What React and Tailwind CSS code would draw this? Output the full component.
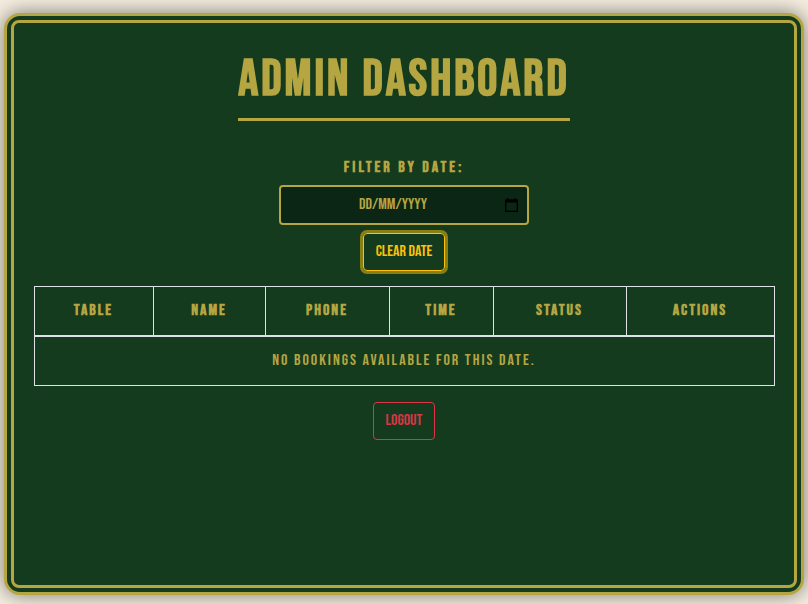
import { useState } from "react";

const columns = [
  { label: "Table", width: "w-[119px]" },
  { label: "Name", width: "w-[112px]" },
  { label: "Phone", width: "w-[124px]" },
  { label: "Time", width: "w-[104px]" },
  { label: "Status", width: "w-[133px]" },
  { label: "Actions", width: "w-[148px]" },
];

function CalendarIcon() {
  return (
    <svg viewBox="0 0 14 14" className="h-[14px] w-[14px] fill-black" aria-hidden="true">
      <path
        fillRule="evenodd"
        d="M2 0h1.500v1.300h6V0H11v1.300h1c.6 0 1 .4 1 1V13c0 .6-.4 1-1 1H1c-.6 0-1-.4-1-1V2.300c0-.6.4-1 1-1h1zM1.300 4.500v8.200h10.400V4.500z"
      />
    </svg>
  );
}

export default function App() {
  const [date, setDate] = useState("");

  return (
    <div className="flex min-h-screen flex-col bg-[#f5eee0] px-1 pt-[13px] pb-[9px] font-['Bebas_Neue','Liberation_Sans_Narrow','Liberation_Sans',sans-serif] text-base text-[#b5a642] uppercase">
      <div className="flex grow flex-col rounded-[16px] border-3 border-[#b5a642] bg-[#153b1f] p-1 shadow-[0_0_20px_rgba(0,0,0,0.5)]">
        <main className="flex grow flex-col items-center rounded-[8px] border-3 border-[#b5a642] px-5 pt-6">
          <h1 className="border-b-3 border-[#b5a642] pt-[3px] pb-2 text-[50px] leading-[60px] font-bold tracking-[3px] whitespace-nowrap">
            Admin Dashboard
          </h1>

          <label htmlFor="date" className="mt-9 leading-[22px] font-bold tracking-[3px]">
            Filter by Date:
          </label>
          <div className="mt-1.5 flex h-10 w-[250px] items-center rounded border-2 border-[#b5a642] bg-[#0c2615] pr-2">
            <input
              id="date"
              type="text"
              value={date}
              onChange={(e) => setDate(e.target.value)}
              placeholder="DD/MM/YYYY"
              className="min-w-0 grow bg-transparent text-center outline-none placeholder:text-[#b5a642]"
            />
            <button type="button" aria-label="Open calendar">
              <CalendarIcon />
            </button>
          </div>
          <button
            type="button"
            onClick={() => setDate("")}
            className="mt-2 h-[38px] rounded border border-[#ffc107] px-3 whitespace-nowrap text-[#ffc107] uppercase ring-3 ring-[#8a7f12]"
          >
            Clear Date
          </button>

          <table className="mt-[15px] w-full table-fixed border-collapse text-center">
            <thead>
              <tr className="h-[49px]">
                {columns.map((c) => (
                  <th key={c.label} scope="col" className={`${c.width} border border-b-2 border-[#dee2e6] font-bold tracking-[2px]`}>
                    {c.label}
                  </th>
                ))}
              </tr>
            </thead>
            <tbody>
              <tr className="h-[50px]">
                <td colSpan={6} className="border border-[#dee2e6] tracking-[2px]">
                  No bookings available for this date.
                </td>
              </tr>
            </tbody>
          </table>

          <button
            type="button"
            className="mt-4 h-[38px] rounded border border-[#dc3545] px-3 text-[#dc3545] uppercase"
          >
            Logout
          </button>
        </main>
      </div>
    </div>
  );
}
